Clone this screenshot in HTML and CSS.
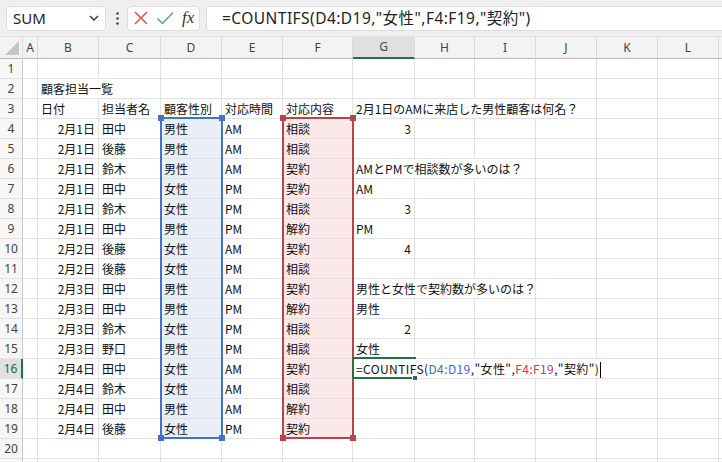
FILE: index.html
```html
<!DOCTYPE html>
<html lang="ja">

<head>
    <meta charset="UTF-8">
    <title>顧客担当一覧</title>
    <link rel="stylesheet" href="styles.css">
</head>

<body>
    <div class="topbar">
        <div class="namebox">
            <span>SUM</span>
            <svg class="chev" width="10" height="6" viewBox="0 0 10 6"><path d="M1 1l4 4 4-4" fill="none" stroke="#333" stroke-width="1.4"/></svg>
        </div>
        <div class="dots">
            <svg width="3" height="13" viewBox="0 0 3 13"><circle cx="1.5" cy="1.5" r="1.3" fill="#444"/><circle cx="1.5" cy="6.5" r="1.3" fill="#444"/><circle cx="1.5" cy="11.5" r="1.3" fill="#444"/></svg>
        </div>
        <div class="actions">
            <svg width="16" height="16" viewBox="0 0 16 16"><path d="M2 2l12 12M14 2L2 14" stroke="#d9534f" stroke-width="1.5" fill="none"/></svg>
            <svg width="18" height="16" viewBox="0 0 18 16"><path d="M1.5 8.5l5 5L17 2.5" stroke="#5fa86a" stroke-width="1.5" fill="none"/></svg>
            <span class="fx">fx</span>
        </div>
        <div class="formula">=COUNTIFS(D4:D19,"女性",F4:F19,"契約")</div>
    </div>

    <div class="sheet">
        <table class="grid">
            <colgroup>
                <col class="c-rh"><col class="c-a"><col class="c-n"><col class="c-c"><col class="c-n"><col class="c-n"><col class="c-f"><col class="c-c"><col class="c-h"><col class="c-n"><col class="c-n"><col class="c-n"><col class="c-n"><col class="c-n">
            </colgroup>
            <tr class="head">
                <th class="corner"><span class="tri"></span></th><th>A</th><th>B</th><th>C</th><th>D</th><th>E</th><th>F</th><th class="sel">G</th><th>H</th><th>I</th><th>J</th><th>K</th><th>L</th><th></th>
            </tr>
            <tr><th>1</th><td></td><td></td><td></td><td></td><td></td><td></td><td></td><td></td><td></td><td></td><td></td><td></td><td></td></tr>
            <tr><th>2</th><td></td><td colspan="2">顧客担当一覧</td><td></td><td></td><td></td><td></td><td></td><td></td><td></td><td></td><td></td><td></td></tr>
            <tr><th>3</th><td></td><td>日付</td><td>担当者名</td><td>顧客性別</td><td>対応時間</td><td>対応内容</td><td colspan="4">2月1日のAMに来店した男性顧客は何名？</td><td></td><td></td><td></td></tr>
            <tr><th>4</th><td></td><td class="r">2月1日</td><td>田中</td><td class="d">男性</td><td>AM</td><td class="f">相談</td><td class="r">3</td><td></td><td></td><td></td><td></td><td></td><td></td></tr>
            <tr><th>5</th><td></td><td class="r">2月1日</td><td>後藤</td><td class="d">男性</td><td>AM</td><td class="f">相談</td><td></td><td></td><td></td><td></td><td></td><td></td><td></td></tr>
            <tr><th>6</th><td></td><td class="r">2月1日</td><td>鈴木</td><td class="d">男性</td><td>AM</td><td class="f">契約</td><td colspan="3">AMとPMで相談数が多いのは？</td><td></td><td></td><td></td><td></td></tr>
            <tr><th>7</th><td></td><td class="r">2月1日</td><td>田中</td><td class="d">女性</td><td>PM</td><td class="f">契約</td><td>AM</td><td></td><td></td><td></td><td></td><td></td><td></td></tr>
            <tr><th>8</th><td></td><td class="r">2月1日</td><td>鈴木</td><td class="d">女性</td><td>PM</td><td class="f">相談</td><td class="r">3</td><td></td><td></td><td></td><td></td><td></td><td></td></tr>
            <tr><th>9</th><td></td><td class="r">2月1日</td><td>田中</td><td class="d">男性</td><td>PM</td><td class="f">解約</td><td>PM</td><td></td><td></td><td></td><td></td><td></td><td></td></tr>
            <tr><th>10</th><td></td><td class="r">2月2日</td><td>後藤</td><td class="d">女性</td><td>AM</td><td class="f">契約</td><td class="r">4</td><td></td><td></td><td></td><td></td><td></td><td></td></tr>
            <tr><th>11</th><td></td><td class="r">2月2日</td><td>後藤</td><td class="d">女性</td><td>PM</td><td class="f">相談</td><td></td><td></td><td></td><td></td><td></td><td></td><td></td></tr>
            <tr><th>12</th><td></td><td class="r">2月3日</td><td>田中</td><td class="d">男性</td><td>AM</td><td class="f">契約</td><td colspan="3">男性と女性で契約数が多いのは？</td><td></td><td></td><td></td><td></td></tr>
            <tr><th>13</th><td></td><td class="r">2月3日</td><td>田中</td><td class="d">男性</td><td>PM</td><td class="f">解約</td><td>男性</td><td></td><td></td><td></td><td></td><td></td><td></td></tr>
            <tr><th>14</th><td></td><td class="r">2月3日</td><td>鈴木</td><td class="d">女性</td><td>PM</td><td class="f">相談</td><td class="r">2</td><td></td><td></td><td></td><td></td><td></td><td></td></tr>
            <tr><th>15</th><td></td><td class="r">2月3日</td><td>野口</td><td class="d">男性</td><td>PM</td><td class="f">相談</td><td>女性</td><td></td><td></td><td></td><td></td><td></td><td></td></tr>
            <tr><th class="sel">16</th><td></td><td class="r">2月4日</td><td>田中</td><td class="d">女性</td><td>AM</td><td class="f">契約</td><td colspan="5" class="edit">=COUNTIFS(<span class="ref-d">D4:D19</span>,"女性",<span class="ref-f">F4:F19</span>,"契約")<span class="caret"></span></td><td></td><td></td></tr>
            <tr><th>17</th><td></td><td class="r">2月4日</td><td>鈴木</td><td class="d">女性</td><td>AM</td><td class="f">相談</td><td></td><td></td><td></td><td></td><td></td><td></td><td></td></tr>
            <tr><th>18</th><td></td><td class="r">2月4日</td><td>田中</td><td class="d">男性</td><td>AM</td><td class="f">解約</td><td></td><td></td><td></td><td></td><td></td><td></td><td></td></tr>
            <tr><th>19</th><td></td><td class="r">2月4日</td><td>後藤</td><td class="d">女性</td><td>PM</td><td class="f">契約</td><td></td><td></td><td></td><td></td><td></td><td></td><td></td></tr>
            <tr><th>20</th><td></td><td></td><td></td><td></td><td></td><td></td><td></td><td></td><td></td><td></td><td></td><td></td><td></td></tr>
            <tr><th></th><td></td><td></td><td></td><td></td><td></td><td></td><td></td><td></td><td></td><td></td><td></td><td></td><td></td></tr>
        </table>

        <!-- range outlines drawn over the grid -->
        <div class="range range-d"><i class="h tl"></i><i class="h tr"></i><i class="h bl"></i><i class="h br"></i></div>
        <div class="range range-f"><i class="h tl"></i><i class="h tr"></i><i class="h bl"></i><i class="h br"></i></div>
        <div class="active"><i class="handle"></i></div>
    </div>
</body>

</html>
```

FILE: styles.css
```css
* {
    box-sizing: border-box;
}

body {
    margin: 0;
    width: 722px;
    height: 462px;
    overflow: hidden;
    background: #fff;
    font-family: "Noto Sans CJK JP", sans-serif;
    color: #111;
}

/* formula bar */
.topbar {
    height: 36px;
    background: #efefef;
    display: flex;
    align-items: center;
    padding-left: 6px;
    white-space: nowrap;
}

.namebox {
    width: 100px;
    height: 25px;
    background: white;
    border: 1px solid #dcdcdc;
    border-radius: 4px;
    display: flex;
    align-items: center;
    justify-content: space-between;
    padding: 0 6px 0 6px;
    font-family: "Noto Sans", sans-serif;
    font-size: 15px;
    color: #222;
}

.dots {
    width: 21px;
    display: flex;
    justify-content: center;
    padding-left: 1px;
}

.actions {
    width: 73px;
    height: 25px;
    background: white;
    border: 1px solid #dcdcdc;
    border-radius: 4px;
    display: flex;
    align-items: center;
    gap: 7px;
    padding-left: 5px;
}

.fx {
    font-family: "Liberation Serif", serif;
    font-style: italic;
    font-size: 17px;
    color: #333;
    margin-left: 1px;
}

.formula {
    margin-left: 6px;
    flex: 1;
    height: 25px;
    background: white;
    border: 1px solid #dcdcdc;
    border-right: none;
    border-radius: 4px 0 0 4px;
    padding-left: 15px;
    font-family: "Noto Sans", "Noto Sans CJK JP", sans-serif;
    font-size: 15.5px;
    letter-spacing: 0.45px;
    line-height: 23px;
    color: #222;
}

/* sheet grid */
.sheet {
    position: relative;
}

.grid {
    border-collapse: separate;
    border-spacing: 0;
    table-layout: fixed;
    width: 780px;
}

.c-rh { width: 23px; }
.c-a { width: 15px; }
.c-n { width: 61px; }
.c-c { width: 62px; }
.c-f { width: 70px; }
.c-h { width: 60px; }

.grid tr {
    height: 20px;
}

.grid td {
    height: 20px;
    padding: 0 3px;
    border-right: 1px solid #e1e1e1;
    border-bottom: 1px solid #e1e1e1;
    font-size: 12px;
    line-height: 19px;
    white-space: nowrap;
    overflow: hidden;
    vertical-align: middle;
}

.grid td.r {
    text-align: right;
}

.grid td.d {
    background: #e9eef8;
}

.grid td.f {
    background: #fbe9ea;
}

.grid th {
    font-family: "Noto Sans", sans-serif;
    font-weight: normal;
    font-size: 12px;
    color: #444;
    background: #f7f7f7;
    border-right: 1px solid #c9c9c9;
    border-bottom: 1px solid #e1e1e1;
    padding: 0;
    text-align: center;
    line-height: 19px;
}

.grid tr.head {
    height: 22px;
}

.grid tr.head th {
    background: #f3f3f3;
    border-right: 1px solid #dadada;
    border-bottom: 1px solid #b9b9b9;
    border-top: 1px solid #e3e3e3;
    line-height: 20px;
}

.grid tr.head th.sel {
    background: #e0e0e0;
    border-bottom: 2px solid #217346;
    color: #2b5b3a;
}

.grid th.sel {
    background: #e0e0e0;
    border-right: 2px solid #217346;
    color: #2b5b3a;
}

.corner {
    position: relative;
}

.tri {
    position: absolute;
    right: 3px;
    bottom: 3px;
    width: 0;
    height: 0;
    border-left: 14px solid transparent;
    border-bottom: 14px solid #c6c6c6;
}

.edit {
    color: #111;
    letter-spacing: 0.4px;
}

.ref-d {
    color: #3d6cb9;
}

.ref-f {
    color: #b8434a;
}

.caret {
    display: inline-block;
    width: 1px;
    height: 16px;
    background: #000;
    vertical-align: -4px;
    margin-left: 1px;
}

/* overlays */
.range {
    position: absolute;
    top: 81px;
    height: 322px;
    border: 2px solid;
}

.range-d {
    left: 160px;
    width: 63px;
    border-color: #4472c4;
}

.range-f {
    left: 282px;
    width: 72px;
    border-color: #b8434a;
}

.h {
    position: absolute;
    width: 6px;
    height: 6px;
}

.range-d .h { background: #4472c4; }
.range-f .h { background: #b8434a; }

.tl { left: -4px; top: -4px; }
.tr { right: -4px; top: -4px; }
.bl { left: -4px; bottom: -4px; }
.br { right: -4px; bottom: -4px; }

.active {
    position: absolute;
    left: 352px;
    top: 321px;
    width: 64px;
    height: 22px;
    border: 2px solid #217346;
    border-right: none;
}

.handle {
    position: absolute;
    right: -2px;
    bottom: -4px;
    width: 6px;
    height: 6px;
    background: #217346;
    border: 1px solid white;
}
```
